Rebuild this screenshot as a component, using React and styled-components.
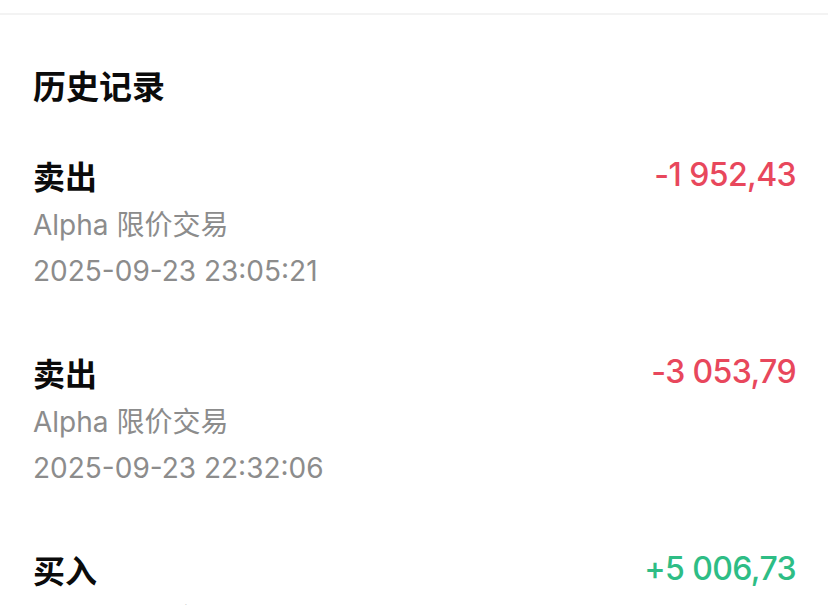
import React from "react";
import styled, { createGlobalStyle } from "styled-components";

const GlobalStyle = createGlobalStyle`
  html, body { margin: 0; padding: 0; background: #ffffff; }
  body { font-family: Inter, "Noto Sans CJK SC", sans-serif; -webkit-font-smoothing: antialiased; }
`;

const Page = styled.div`
  width: 828px;
  height: 605px;
  overflow: hidden;
  background: #ffffff;
  padding-top: 13px;
  box-sizing: border-box;
`;

const Divider = styled.div`
  height: 2px;
  background: #f3f3f3;
`;

const Content = styled.div`
  padding: 47px 32px 0 33px;
`;

const Title = styled.h2`
  margin: 0;
  font-size: 33px;
  line-height: 46px;
  font-weight: 700;
  color: #0b0b0b;
  font-family: "Noto Sans CJK SC", sans-serif;
`;

const List = styled.div`
  display: flex;
  flex-direction: column;
  gap: 58px;
  margin-top: 47px;
`;

const Row = styled.div`
  display: flex;
  justify-content: space-between;
  align-items: flex-start;
`;

const Info = styled.div`
  display: flex;
  flex-direction: column;
`;

const Side = styled.div`
  font-family: "Noto Sans CJK SC", sans-serif;
  font-size: 32px;
  line-height: 40px;
  font-weight: 600;
  color: #0b0b0b;
`;

const Meta = styled.div`
  font-family: Inter, "Noto Sans CJK SC", sans-serif;
  font-size: 28px;
  line-height: 46px;
  color: #8c8c8c;
  margin-top: ${(p) => (p.$first ? "7px" : "0")};
`;

const Amount = styled.div`
  font-family: Inter, sans-serif;
  font-size: 32px;
  line-height: 40px;
  font-weight: 500;
  letter-spacing: -0.6px;
  white-space: nowrap;
  color: ${(p) => (p.$positive ? "#2ebd85" : "#e8475c")};
`;

const GAP = "\u00A0";

const records = [
  { side: "卖出", type: "Alpha 限价交易", time: "2025-09-23 23:05:21", amount: `-1${GAP}952,43`, positive: false },
  { side: "卖出", type: "Alpha 限价交易", time: "2025-09-23 22:32:06", amount: `-3${GAP}053,79`, positive: false },
  { side: "买入", type: "Alpha 限价交易", time: "2025-09-23 22:10:44", amount: `+5${GAP}006,73`, positive: true },
];

export default function App() {
  return (
    <>
      <GlobalStyle />
      <Page>
        <Divider />
        <Content>
          <Title>历史记录</Title>
          <List>
            {records.map((r, i) => (
              <Row key={i}>
                <Info>
                  <Side>{r.side}</Side>
                  <Meta $first>{r.type}</Meta>
                  <Meta>{r.time}</Meta>
                </Info>
                <Amount $positive={r.positive}>{r.amount}</Amount>
              </Row>
            ))}
          </List>
        </Content>
      </Page>
    </>
  );
}
